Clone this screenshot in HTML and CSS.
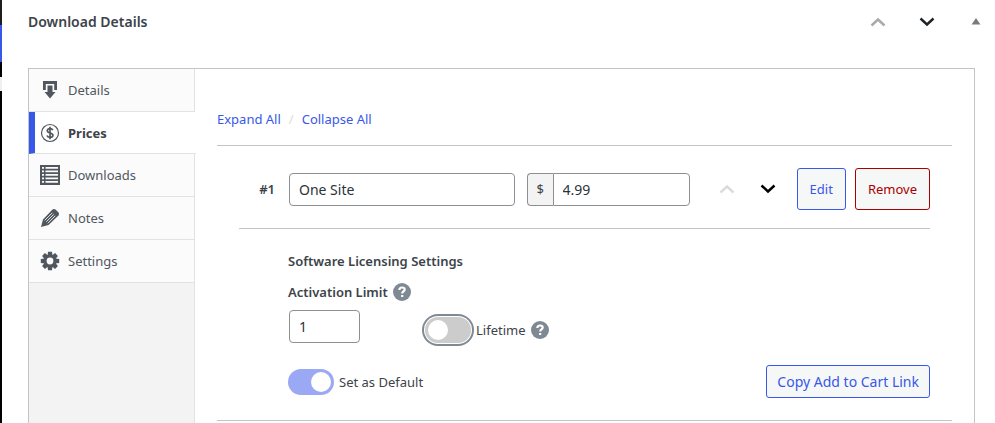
FILE: index.html
```html
<!DOCTYPE html>
<html lang="en">

<head>
    <meta charset="UTF-8">
    <meta name="viewport" content="width=device-width, initial-scale=1.0">
    <title>Download Details</title>
    <link rel="stylesheet" href="styles.css">
</head>

<body>
    <div class="admin-menu">
        <div class="menu-top"></div>
        <div class="menu-current"></div>
        <div class="menu-gap"></div>
        <div class="menu-arrow"></div>
    </div>

    <main class="metabox">
        <header class="metabox-header">
            <h2 class="metabox-title">Download Details</h2>
            <div class="metabox-actions">
                <button type="button" class="icon-btn move-up" aria-label="Move up">
                    <svg width="16" height="10" viewBox="0 0 16 10"><path d="M1.5 8.500 8 2.500l6.500 6" /></svg>
                </button>
                <button type="button" class="icon-btn move-down" aria-label="Move down">
                    <svg width="16" height="10" viewBox="0 0 16 10"><path d="M1.500 1.500 8 7.500l6.500-6" /></svg>
                </button>
                <button type="button" class="icon-btn toggle-panel" aria-label="Toggle panel">
                    <svg width="10" height="10" viewBox="0 0 10 10"><path d="M5 1 9.500 7.500h-9z" /></svg>
                </button>
            </div>
        </header>

        <div class="panel">
            <nav class="tabs">
                <a href="#details" class="tab">
                    <svg width="20" height="20" viewBox="0 0 20 20">
                        <path d="M3 1h14v9h-2.800V4H5.800v6H3z" />
                        <path d="M7.500 5.500h5V12h3L10 18.500 4.500 12h3z" />
                    </svg>
                    <span>Details</span>
                </a>
                <a href="#prices" class="tab active">
                    <svg width="20" height="20" viewBox="0 0 20 20" class="line-icon">
                        <circle cx="10" cy="10" r="8.500" />
                        <path class="dollar" d="M12.800 7.200c-.5-1.100-1.500-1.600-2.800-1.600-1.600 0-2.700.8-2.700 2.100 0 3 5.600 1.500 5.600 4.500 0 1.400-1.200 2.200-2.900 2.200-1.500 0-2.600-.6-3-1.800M10 3.800v12.400" />
                    </svg>
                    <span>Prices</span>
                </a>
                <a href="#downloads" class="tab">
                    <svg width="20" height="20" viewBox="0 0 20 20">
                        <path d="M0 0h20v20H0z" />
                        <path class="cut" d="M2 2h2v1.800H2zM5.500 2H18v1.800H5.500zM2 5.500h2v1.800H2zM5.500 5.500H18v1.800H5.500zM2 9h2v1.800H2zM5.500 9H18v1.800H5.500zM2 12.500h2v1.800H2zM5.500 12.500H18v1.800H5.500zM2 16h2v1.800H2zM5.500 16H18v1.800H5.500z" />
                    </svg>
                    <span>Downloads</span>
                </a>
                <a href="#notes" class="tab">
                    <svg width="20" height="20" viewBox="0 0 20 20">
                        <path d="M12.500 1.500q1.500-1.200 3 0l3 3q1.200 1.500 0 3L8.500 17 1 19l2-7.500z" />
                        <path class="cut-line" d="M4.800 12.300 12.300 4.800M6.300 13.800 13.800 6.300M7.800 15.300 15.300 7.800" />
                    </svg>
                    <span>Notes</span>
                </a>
                <a href="#settings" class="tab">
                    <svg width="20" height="20" viewBox="0 0 20 20">
                        <g id="teeth">
                            <path d="M8 .8h4l.5 4h-5zM8 19.200h4l.5-4h-5zM.8 8v4l4 .5v-5zM19.200 8v4l-4 .5v-5z" />
                        </g>
                        <use href="#teeth" transform="rotate(45 10 10)" />
                        <circle cx="10" cy="10" r="6.500" />
                        <circle class="cut" cx="10" cy="10" r="3.400" />
                    </svg>
                    <span>Settings</span>
                </a>
            </nav>

            <section class="content">
                <div class="bulk-links">
                    <a href="#expand">Expand All</a>
                    <span class="separator">/</span>
                    <a href="#collapse">Collapse All</a>
                </div>

                <div class="price">
                    <div class="price-row">
                        <label class="price-number" for="price-name">#1</label>
                        <input type="text" class="field name-field" id="price-name" value="One Site">
                        <div class="amount">
                            <label class="currency" for="price-amount">$</label>
                            <input type="text" class="field amount-field" id="price-amount" value="4.99">
                        </div>
                        <div class="price-order">
                            <button type="button" class="icon-btn disabled" aria-label="Move price up">
                                <svg width="16" height="10" viewBox="0 0 16 10"><path d="M1.500 8.500 8 2.500l6.500 6" /></svg>
                            </button>
                            <button type="button" class="icon-btn" aria-label="Move price down">
                                <svg width="16" height="10" viewBox="0 0 16 10"><path d="M1.500 1.500 8 7.500l6.500-6" /></svg>
                            </button>
                        </div>
                        <div class="price-buttons">
                            <button type="button" class="btn btn-tall">Edit</button>
                            <button type="button" class="btn btn-tall btn-remove">Remove</button>
                        </div>
                    </div>

                    <div class="licensing">
                        <h3 class="section-title">Software Licensing Settings</h3>
                        <div class="limit-label">
                            <label for="limit">Activation Limit</label>
                            <svg class="help" width="18" height="18" viewBox="0 0 18 18">
                                <circle cx="9" cy="9" r="9" />
                                <path d="M6.300 7c.1-1.700 1.200-2.500 2.800-2.500 1.500 0 2.600.8 2.600 2.100 0 1.800-2.500 1.900-2.500 3.800M9.200 12v2" />
                            </svg>
                        </div>
                        <div class="limit-row">
                            <input type="text" class="field limit-field" id="limit" value="1">
                            <div class="switch-group">
                                <input type="checkbox" class="switch focused" id="lifetime">
                                <label for="lifetime">Lifetime</label>
                                <svg class="help" width="18" height="18" viewBox="0 0 18 18">
                                    <circle cx="9" cy="9" r="9" />
                                    <path d="M6.300 7c.1-1.700 1.200-2.500 2.800-2.500 1.500 0 2.600.8 2.600 2.100 0 1.800-2.500 1.900-2.500 3.800M9.200 12v2" />
                                </svg>
                            </div>
                        </div>
                        <div class="default-row">
                            <div class="switch-group">
                                <input type="checkbox" class="switch" id="default-price" checked>
                                <label for="default-price">Set as Default</label>
                            </div>
                            <button type="button" class="btn btn-copy">Copy Add to Cart Link</button>
                        </div>
                    </div>
                </div>
            </section>
        </div>
    </main>
</body>

</html>
```

FILE: styles.css
```css
* {
    margin: 0;
    padding: 0;
    box-sizing: border-box;
}

body {
    display: flex;
    min-height: 100vh;
    overflow: hidden;
    background: #fff;
    color: #3c434a;
    font-family: 'Noto Sans', sans-serif;
    font-size: 13px;
    line-height: 20px;
}

a {
    color: #3858e9;
    text-decoration: none;
}

button,
input {
    font: inherit;
}

/* Edge of the admin menu */
.admin-menu {
    width: 2px;
    background: #000;
}

.menu-top {
    height: 25px;
    background: #1d1d1d;
}

.menu-current {
    height: 37px;
    background: #3858e9;
}

.menu-gap {
    height: 15px;
}

.menu-arrow {
    height: 14px;
    background: #f0f0f1;
}

.metabox {
    flex: 1;
    display: flex;
    flex-direction: column;
    padding: 0 20px 0 26px;
}

.metabox-header {
    display: flex;
    justify-content: space-between;
    height: 44px;
    margin-bottom: 24px;
    align-items: center;
}

.metabox-title,
.section-title {
    font-size: 13px;
    font-weight: 600;
}

.metabox-title {
    font-size: 14px;
}

.metabox-actions {
    display: flex;
    align-items: center;
    gap: 33px;
    margin-right: -6px;
}

.icon-btn {
    display: flex;
    border: none;
    background: none;
    color: #000;
    cursor: pointer;
}

.icon-btn path {
    fill: none;
    stroke: currentColor;
    stroke-width: 2.4;
}

.move-up {
    color: #a7aaad;
}

.move-down {
    color: #1d2327;
}

.toggle-panel {
    color: #787c82;
    margin-left: 3px;
}

.toggle-panel path {
    fill: currentColor;
    stroke: none;
}

.disabled {
    color: #dcdcde;
}

.panel {
    flex: 1;
    display: flex;
    border: 1px solid #c3c4c7;
    border-bottom: none;
}

/* Tabs */
.tabs {
    width: 166px;
    background: #f3f3f3;
    border-right: 1px solid #e2e2e2;
}

.tab {
    display: flex;
    align-items: center;
    gap: 8px;
    height: 43px;
    padding-left: 11px;
    background: #fbfbfb;
    border-bottom: 1px solid #e2e2e2;
    color: #50575e;
}

.tab svg {
    fill: #50575e;
}

.tab .cut {
    fill: #fbfbfb;
}

.tab .cut-line {
    fill: none;
    stroke: #fbfbfb;
    stroke-width: 0.9;
}

.tab .line-icon {
    fill: none;
    stroke: #50575e;
    stroke-width: 1.2;
}

.tab .dollar {
    stroke-width: 1.7;
}

.tab.active {
    height: 42px;
    margin-right: -2px;
    padding-left: 5px;
    background: #fff;
    border-left: 6px solid #3858e9;
    font-weight: 700;
    color: #3c434a;
}

/* Content */
.content {
    flex: 1;
    padding: 0 22px;
}

.bulk-links {
    display: flex;
    gap: 8px;
    padding: 40px 0 16px;
    border-bottom: 1px solid #c3c4c7;
}

.separator {
    color: #dcdcde;
}

.price {
    padding: 0 22px 22px;
    margin-bottom: 20px;
    border-bottom: 1px solid #c3c4c7;
}

.price-row {
    display: flex;
    align-items: center;
    padding: 22px 0 18px;
    border-bottom: 1px solid #c3c4c7;
}

.price-number {
    width: 36px;
    margin-right: 14px;
    text-align: right;
    font-weight: 600;
}

.field {
    min-width: 0;
    height: 33px;
    padding: 0 9px;
    border: 1px solid #8c8f94;
    border-radius: 4px;
    background: #fff;
    color: #2c3338;
    font-size: 14px;
}

.name-field {
    flex: 1;
    margin-right: 12px;
}

.amount {
    display: flex;
    width: 163px;
}

.currency {
    width: 26px;
    border: 1px solid #8c8f94;
    border-right: none;
    border-radius: 4px 0 0 4px;
    background: #f3f3f3;
    text-align: center;
    line-height: 30px;
}

.amount-field {
    flex: 1;
    border-radius: 0 4px 4px 0;
}

.price-order {
    display: flex;
    gap: 25px;
    padding: 0 21px 0 29px;
}

.price-buttons {
    display: flex;
    gap: 9px;
}

.btn {
    height: 33px;
    padding: 0 12px;
    border: 1px solid #3858e9;
    border-radius: 3px;
    background: #f6f7f7;
    color: #3858e9;
    cursor: pointer;
}

.btn-tall {
    height: 42px;
}

.btn-copy {
    padding: 0 10px;
    font-size: 14px;
}

.btn-remove {
    border-color: #a00;
    color: #a00;
}

/* Licensing */
.licensing {
    padding: 22px 0 0 49px;
}

.limit-label {
    display: flex;
    align-items: center;
    gap: 5px;
    margin: 11px 0 8px;
    font-weight: 600;
}

.help circle {
    fill: #7e8993;
}

.help path {
    fill: none;
    stroke: #fff;
    stroke-width: 2.2;
}

.limit-row {
    display: flex;
    align-items: flex-start;
    gap: 65px;
}

.limit-field {
    width: 71px;
    margin-left: 1px;
}

.switch-group {
    display: flex;
    align-items: center;
    gap: 5px;
}

.limit-row .switch-group {
    padding-top: 7px;
}

.switch {
    appearance: none;
    display: flex;
    width: 46px;
    height: 26px;
    padding: 3px;
    border-radius: 13px;
    background: #ccc;
    cursor: pointer;
}

.switch::before {
    content: "";
    width: 20px;
    height: 20px;
    border-radius: 50%;
    background: #fff;
}

.switch:checked {
    justify-content: flex-end;
    background: #9ba9f4;
}

.focused {
    box-shadow: 0 0 0 1px #fff, 0 0 0 3px #7e8993;
}

.default-row {
    display: flex;
    align-items: center;
    justify-content: space-between;
    margin-top: 22px;
}
```
